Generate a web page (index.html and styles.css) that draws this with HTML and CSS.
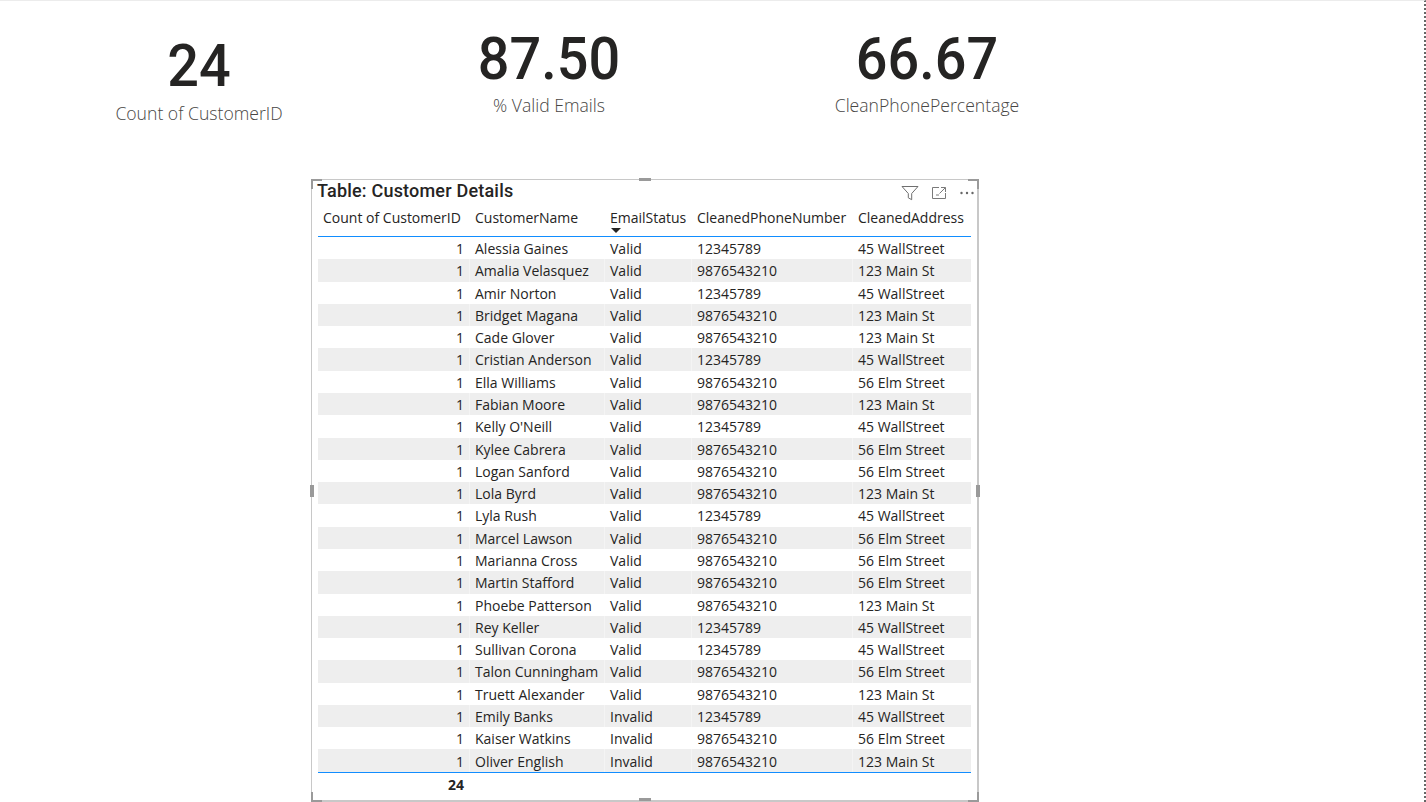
FILE: index.html
```html
<!DOCTYPE html>
<html lang="en">
<head>
    <meta charset="UTF-8">
    <title>Customer Details</title>
    <link rel="stylesheet" href="styles.css">
</head>
<body>
    <div class="canvas">
        <div class="kpis">
            <div class="kpi kpi-count">
                <div class="kpi-value">24</div>
                <div class="kpi-label">Count of CustomerID</div>
            </div>
            <div class="kpi kpi-email">
                <div class="kpi-value">87.50</div>
                <div class="kpi-label">% Valid Emails</div>
            </div>
            <div class="kpi kpi-phone">
                <div class="kpi-value">66.67</div>
                <div class="kpi-label">CleanPhonePercentage</div>
            </div>
        </div>

        <div class="visual">
            <span class="grip grip-tl"></span>
            <span class="grip grip-tr"></span>
            <span class="grip grip-bl"></span>
            <span class="grip grip-br"></span>
            <span class="grip grip-top"></span>
            <span class="grip grip-bottom"></span>
            <span class="grip grip-left"></span>
            <span class="grip grip-right"></span>

            <div class="visual-head">
                <div class="visual-title">Table: Customer Details</div>
                <div class="visual-icons">
                    <svg width="18" height="16" viewBox="0 0 18 16"><path d="M1 1.500h16l-6.300 7v6.200l-3.400-1.900V8.500z" fill="none" stroke="#6f6f6f" stroke-width="1"/></svg>
                    <svg width="16" height="14" viewBox="0 0 16 14"><path d="M8 1.500H1.500v11h13V7M10 1.500h4.500V6M14.300 1.700L8.500 7.500M5 9h3" fill="none" stroke="#7a7a7a" stroke-width="1"/></svg>
                    <svg width="16" height="14" viewBox="0 0 16 14"><circle cx="2.500" cy="7" r="1.200" fill="#666"/><circle cx="8" cy="7" r="1.200" fill="#666"/><circle cx="13.500" cy="7" r="1.200" fill="#666"/></svg>
                </div>
            </div>

            <table class="data">
                <colgroup>
                    <col class="c-count"><col class="c-name"><col class="c-status"><col class="c-phone"><col class="c-addr">
                </colgroup>
                <thead>
                    <tr>
                        <th>Count of CustomerID</th>
                        <th>CustomerName</th>
                        <th class="sorted">EmailStatus</th>
                        <th>CleanedPhoneNumber</th>
                        <th>CleanedAddress</th>
                    </tr>
                </thead>
                <tbody>
                    <tr><td class="num">1</td><td>Alessia Gaines</td><td>Valid</td><td>12345789</td><td>45 WallStreet</td></tr>
                    <tr><td class="num">1</td><td>Amalia Velasquez</td><td>Valid</td><td>9876543210</td><td>123 Main St</td></tr>
                    <tr><td class="num">1</td><td>Amir Norton</td><td>Valid</td><td>12345789</td><td>45 WallStreet</td></tr>
                    <tr><td class="num">1</td><td>Bridget Magana</td><td>Valid</td><td>9876543210</td><td>123 Main St</td></tr>
                    <tr><td class="num">1</td><td>Cade Glover</td><td>Valid</td><td>9876543210</td><td>123 Main St</td></tr>
                    <tr><td class="num">1</td><td>Cristian Anderson</td><td>Valid</td><td>12345789</td><td>45 WallStreet</td></tr>
                    <tr><td class="num">1</td><td>Ella Williams</td><td>Valid</td><td>9876543210</td><td>56 Elm Street</td></tr>
                    <tr><td class="num">1</td><td>Fabian Moore</td><td>Valid</td><td>9876543210</td><td>123 Main St</td></tr>
                    <tr><td class="num">1</td><td>Kelly O'Neill</td><td>Valid</td><td>12345789</td><td>45 WallStreet</td></tr>
                    <tr><td class="num">1</td><td>Kylee Cabrera</td><td>Valid</td><td>9876543210</td><td>56 Elm Street</td></tr>
                    <tr><td class="num">1</td><td>Logan Sanford</td><td>Valid</td><td>9876543210</td><td>56 Elm Street</td></tr>
                    <tr><td class="num">1</td><td>Lola Byrd</td><td>Valid</td><td>9876543210</td><td>123 Main St</td></tr>
                    <tr><td class="num">1</td><td>Lyla Rush</td><td>Valid</td><td>12345789</td><td>45 WallStreet</td></tr>
                    <tr><td class="num">1</td><td>Marcel Lawson</td><td>Valid</td><td>9876543210</td><td>56 Elm Street</td></tr>
                    <tr><td class="num">1</td><td>Marianna Cross</td><td>Valid</td><td>9876543210</td><td>56 Elm Street</td></tr>
                    <tr><td class="num">1</td><td>Martin Stafford</td><td>Valid</td><td>9876543210</td><td>56 Elm Street</td></tr>
                    <tr><td class="num">1</td><td>Phoebe Patterson</td><td>Valid</td><td>9876543210</td><td>123 Main St</td></tr>
                    <tr><td class="num">1</td><td>Rey Keller</td><td>Valid</td><td>12345789</td><td>45 WallStreet</td></tr>
                    <tr><td class="num">1</td><td>Sullivan Corona</td><td>Valid</td><td>12345789</td><td>45 WallStreet</td></tr>
                    <tr><td class="num">1</td><td>Talon Cunningham</td><td>Valid</td><td>9876543210</td><td>56 Elm Street</td></tr>
                    <tr><td class="num">1</td><td>Truett Alexander</td><td>Valid</td><td>9876543210</td><td>123 Main St</td></tr>
                    <tr><td class="num">1</td><td>Emily Banks</td><td>Invalid</td><td>12345789</td><td>45 WallStreet</td></tr>
                    <tr><td class="num">1</td><td>Kaiser Watkins</td><td>Invalid</td><td>9876543210</td><td>56 Elm Street</td></tr>
                    <tr><td class="num">1</td><td>Oliver English</td><td>Invalid</td><td>9876543210</td><td>123 Main St</td></tr>
                </tbody>
                <tfoot>
                    <tr><td class="num">24</td><td></td><td></td><td></td><td></td></tr>
                </tfoot>
            </table>
        </div>
    </div>
</body>
</html>
```

FILE: styles.css
```css
html,body{
    margin: 0;
    padding: 0;
    background-color: #fff;
}
.canvas{
    box-sizing: border-box;
    width: 1426px;
    height: 802px;
    overflow: hidden;
    border-top: 1px solid #ececec;
    border-right: 2px dotted #666;
    font-family: "Open Sans", "Noto Sans", sans-serif;
}

/* kpi cards */
.kpis{
    display: flex;
    height: 178px;
    padding-left: 99px;
}
.kpi{
    width: 200px;
    text-align: center;
}
.kpi-email{
    margin-left: 150px;
}
.kpi-phone{
    margin-left: 178px;
}
.kpi-value{
    font-family: Roboto, "Liberation Sans", sans-serif;
    font-size: 60px;
    font-weight: 500;
    line-height: 70px;
    color: #252423;
    transform: scaleX(0.93);
}
.kpi-label{
    font-size: 17.6px;
    font-weight: 300;
    line-height: 24px;
    color: #484644;
}
.kpi-count{
    padding-top: 30px;
}
.kpi-email,
.kpi-phone{
    padding-top: 23px;
}
.kpi-email .kpi-label,
.kpi-phone .kpi-label{
    margin-top: -1px;
}

/* table visual */
.visual{
    box-sizing: border-box;
    position: relative;
    width: 668px;
    height: 623px;
    margin-left: 311px;
    padding: 0 7px 0 6px;
    border: 1px solid #c8c8c8;
    border-width: 1px 2px 2px 1px;
}
.visual-head{
    display: flex;
    justify-content: space-between;
    height: 26px;
}
.visual-title{
    margin-left: -1px;
    font-family: Roboto, "Liberation Sans", sans-serif;
    font-size: 18px;
    font-weight: 500;
    line-height: 22px;
    letter-spacing: 0.2px;
    color: #252423;
}
.visual-icons{
    display: flex;
    align-items: center;
    gap: 12px;
    height: 24px;
    margin-right: -5px;
    padding-top: 1px;
}

.data{
    width: 653px;
    table-layout: fixed;
    border-collapse: separate;
    border-spacing: 0;
    font-size: 14px;
    color: #252423;
}
.c-count{ width: 151px; }
.c-name{ width: 135px; }
.c-status{ width: 87px; }
.c-phone{ width: 161px; }
.c-addr{ width: 119px; }
.data th{
    height: 29px;
    padding: 1px 0 0 6px;
    font-weight: 400;
    text-align: left;
    vertical-align: top;
    white-space: nowrap;
    line-height: 22px;
    border-bottom: 1px solid #118dff;
}
.data th:first-child{
    padding-left: 5px;
}
.data th.sorted{
    position: relative;
}
.data th.sorted::after{
    content: "";
    position: absolute;
    left: 7px;
    bottom: 3px;
    border-top: 5px solid #252423;
    border-left: 5px solid transparent;
    border-right: 5px solid transparent;
}
.data td{
    height: 20.4px;
    padding: 1.9px 0 0 6px;
    white-space: nowrap;
    line-height: 20px;
}
.data tbody tr:nth-child(even) td{
    background-color: #eeeeee;
    border-left: 1px solid #f4f4f4;
    padding-left: 5px;
}
.data tbody tr:nth-child(even) td:first-child{
    border-left: 0;
}
.data td.num,
.data tbody tr:nth-child(even) td.num{
    padding: 1.9px 5px 0 0;
    text-align: right;
}
.data tfoot td{
    height: 21px;
    padding-top: 0;
    padding-bottom: 2px;
    font-weight: 700;
    border-top: 1px solid #118dff;
}

/* selection grips on the frame */
.grip{
    position: absolute;
    background-color: #9a9a9a;
}
.grip-top,
.grip-bottom{
    left: 327px;
    width: 12px;
    height: 3px;
}
.grip-top{ top: -2px; }
.grip-bottom{ bottom: -1px; }
.grip-left,
.grip-right{
    top: 305px;
    width: 4px;
    height: 12px;
}
.grip-left{ left: -2px; }
.grip-right{ right: -3px; }
.grip-tl,
.grip-tr,
.grip-bl,
.grip-br{
    width: 9px;
    height: 8px;
    background-color: transparent;
    border: 0 solid #9a9a9a;
}
.grip-tl{ top: -1px; left: -1px; border-width: 2px 0 0 2px; }
.grip-tr{ top: -1px; right: -2px; border-width: 2px 2px 0 0; }
.grip-bl{ bottom: -2px; left: -1px; border-width: 0 0 2px 2px; }
.grip-br{ bottom: -2px; right: -2px; border-width: 0 2px 2px 0; }
```
